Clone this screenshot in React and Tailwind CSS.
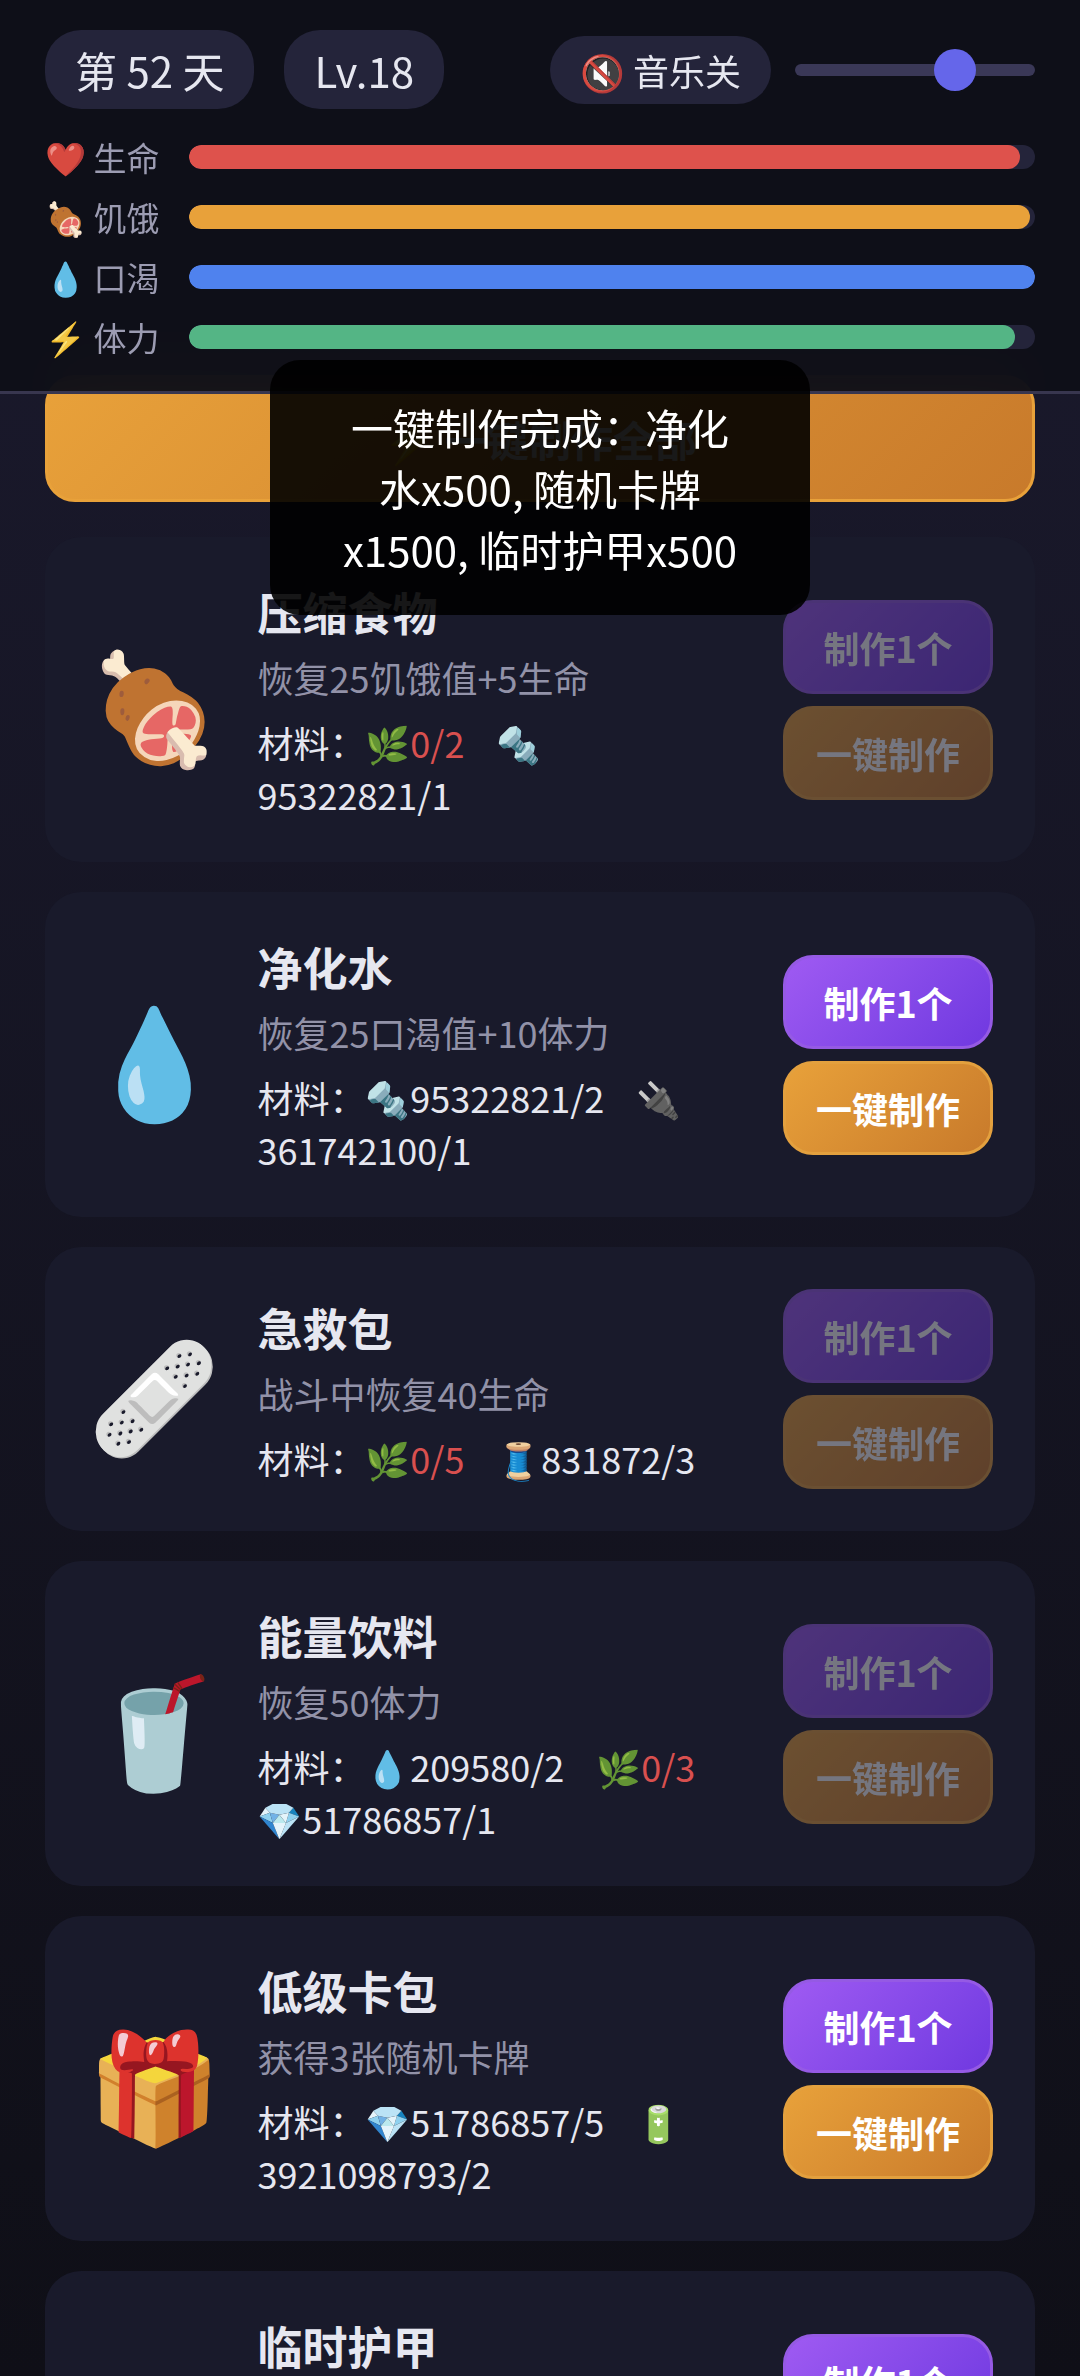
import { useState } from "react";

const stats = [
  { icon: "❤️", name: "生命", value: 98.2, fill: "bg-[#de524c]" },
  { icon: "🍖", name: "饥饿", value: 99.4, fill: "bg-[#e8a13a]" },
  { icon: "💧", name: "口渴", value: 100, fill: "bg-[#4f82ee]" },
  { icon: "⚡", name: "体力", value: 97.6, fill: "bg-[#54b585]" },
];

const recipes = [
  {
    icon: "🍖",
    name: "压缩食物",
    effect: "恢复25饥饿值+5生命",
    craftable: false,
    materials: [
      { icon: "🌿", amount: "0/2", missing: true },
      { icon: "🔩", amount: "95322821/1" },
    ],
  },
  {
    icon: "💧",
    name: "净化水",
    effect: "恢复25口渴值+10体力",
    craftable: true,
    materials: [
      { icon: "🔩", amount: "95322821/2" },
      { icon: "🔌", amount: "361742100/1" },
    ],
  },
  {
    icon: "🩹",
    name: "急救包",
    effect: "战斗中恢复40生命",
    craftable: false,
    materials: [
      { icon: "🌿", amount: "0/5", missing: true },
      { icon: "🧵", amount: "831872/3" },
    ],
  },
  {
    icon: "🥤",
    name: "能量饮料",
    effect: "恢复50体力",
    craftable: false,
    materials: [
      { icon: "💧", amount: "209580/2" },
      { icon: "🌿", amount: "0/3", missing: true },
      { icon: "💎", amount: "51786857/1" },
    ],
  },
  {
    icon: "🎁",
    name: "低级卡包",
    effect: "获得3张随机卡牌",
    craftable: true,
    materials: [
      { icon: "💎", amount: "51786857/5" },
      { icon: "🔋", amount: "3921098793/2" },
    ],
  },
  {
    icon: "🛡️",
    name: "临时护甲",
    effect: "战斗中获得护甲",
    craftable: true,
    materials: [
      { icon: "🔩", amount: "95322821/3" },
      { icon: "🧵", amount: "831872/2" },
    ],
  },
];

function StatBar({ icon, name, value, fill }) {
  return (
    <div className="flex items-center gap-6">
      <span className="w-[120px] shrink-0 whitespace-nowrap text-[33px] leading-[48px] text-[#9c9cb2]">
        <span className="saturate-80">{icon}</span> {name}
      </span>
      <div
        role="progressbar"
        aria-label={name}
        aria-valuenow={value}
        className="h-6 flex-1 overflow-hidden rounded-full bg-[#24243a]"
      >
        <div className={`h-full rounded-full ${fill}`} style={{ width: `${value}%` }} />
      </div>
    </div>
  );
}

function Header() {
  const [volume, setVolume] = useState(70);
  return (
    <header className="sticky top-0 z-10 border-b-3 border-[#38364f] bg-[#0e0f17]/95 px-[45px] py-[30px] backdrop-blur-[30px]">
      <div className="flex items-center justify-between">
        <div className="flex gap-[30px] text-[42px] leading-[61px]">
          <span className="rounded-[36px] bg-[#24243a] px-[30px] py-[9px]">第 52 天</span>
          <span className="rounded-[36px] bg-[#24243a] px-[30px] py-[9px]">Lv.18</span>
        </div>
        <div className="flex items-center gap-6">
          <button
            type="button"
            className="rounded-[36px] bg-[#24243a] px-[30px] py-2 text-[36px] leading-[52px]"
          >
            <span className="saturate-80">🔇</span> 音乐关
          </button>
          <input
            type="range"
            aria-label="音量"
            min="0"
            max="100"
            value={volume}
            onChange={(e) => setVolume(Number(e.target.value))}
            className="h-3 w-[240px] appearance-none rounded-full bg-[#3a3857] [&::-webkit-slider-thumb]:size-[42px] [&::-webkit-slider-thumb]:appearance-none [&::-webkit-slider-thumb]:rounded-full [&::-webkit-slider-thumb]:bg-[#6566ea]"
          />
        </div>
      </div>
      <div className="mt-6 flex flex-col gap-3">
        {stats.map((s) => (
          <StatBar key={s.name} {...s} />
        ))}
      </div>
    </header>
  );
}

function RecipeCard({ icon, name, effect, craftable, materials }) {
  return (
    <li className="flex items-center gap-9 rounded-[36px] bg-[#191a2b] p-[42px]">
      <span className="shrink-0 text-[108px] leading-[156px] saturate-80">{icon}</span>
      <div className="min-w-0 flex-1">
        <h2 className="text-[45px] leading-[66px] font-bold">{name}</h2>
        <p className="mt-1.5 text-[36px] leading-[53px] text-[#9292a8]">{effect}</p>
        <p className="mt-3 text-[36px] leading-[52px]">
          材料：
          {materials.map((m) => (
            <span key={m.icon}>
              <span className="mr-6">
                <span className="saturate-80">{m.icon}</span>
                <span className={m.missing ? "text-[#d9504f]" : ""}>{m.amount}</span>
              </span>{" "}
            </span>
          ))}
        </p>
      </div>
      <div className="flex w-[210px] shrink-0 flex-col gap-3 text-[36px] leading-[52px] font-bold text-white">
        <button
          type="button"
          disabled={!craftable}
          className="rounded-[30px] border-3 border-[#955ae4] bg-linear-135 from-[#9f5af2] to-[#7038e0] py-[18px] disabled:opacity-40"
        >
          制作1个
        </button>
        <button
          type="button"
          disabled={!craftable}
          className="rounded-[30px] border-3 border-[#e3a03e] bg-linear-135 from-[#e8a13a] to-[#c87a2b] py-[18px] disabled:opacity-40"
        >
          一键制作
        </button>
      </div>
    </li>
  );
}

export default function App() {
  return (
    <div className="h-screen overflow-hidden bg-linear-to-b from-[#1b1a2e] to-[#0f0f17] font-['Noto_Sans_CJK_SC','Noto_Color_Emoji',sans-serif] text-[#e6e7f0]">
      <Header />
      <main className="-mt-[19px] px-[45px]">
        <button
          type="button"
          className="w-full rounded-[30px] border-3 border-[#e8a13a] bg-linear-135 from-[#e8a13a] to-[#c87a2b] py-[30px] text-[42px] leading-[61px] font-bold text-white"
        >
          ⚡ 一键制作全部
        </button>
        <ul className="mt-[35px] flex flex-col gap-[30px]">
          {recipes.map((r) => (
            <RecipeCard key={r.name} {...r} />
          ))}
        </ul>
      </main>
      <div
        role="status"
        className="fixed top-[360px] left-1/2 z-20 w-1/2 -translate-x-1/2 rounded-[30px] bg-black/90 px-[72px] py-9 text-center text-[42px] leading-[61px] text-white"
      >
        一键制作完成：净化水x500, 随机卡牌x1500, 临时护甲x500
      </div>
    </div>
  );
}
